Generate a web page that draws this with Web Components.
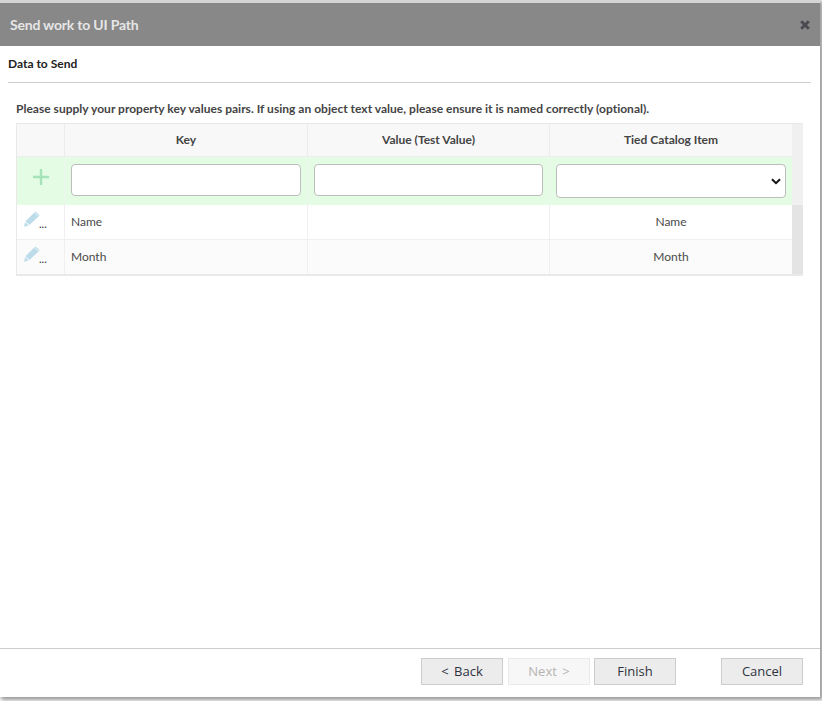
<!DOCTYPE html>
<html lang="en"><head><meta charset="utf-8"><title>Send work to UI Path</title>
<style>html,body{margin:0;padding:0;background:#fff;height:100%;overflow:hidden}body{font-family:Lato,"Liberation Sans",sans-serif;color:#333}</style>
</head><body>
<wizard-dialog>
  <span slot="title">Send work to UI Path</span>
  <span slot="step">Data to Send</span>
  <p>Please supply your property key values pairs. If using an object text value, please ensure it is named correctly (optional).</p>
  <kv-table></kv-table>
  <wiz-button slot="nav">&lt; Back</wiz-button>
  <wiz-button slot="nav" disabled>Next &gt;</wiz-button>
  <wiz-button slot="nav">Finish</wiz-button>
  <wiz-button slot="cancel">Cancel</wiz-button>
</wizard-dialog>
<script>
function def(name,html){customElements.define(name,class extends HTMLElement{connectedCallback(){if(this.shadowRoot)return;const r=this.attachShadow({mode:'open'});r.innerHTML=html;}});}
def('wizard-dialog',`<style>
:host{display:flex;flex-direction:column;box-sizing:border-box;width:820px;height:697px;border-top:3px solid #d4d4d4;background:#fff;box-shadow:2px 2px 4px 1px #999;font-family:Lato,"Liberation Sans",sans-serif}
header{height:43px;flex:none;background:#888;color:#e6e6e6;display:flex;align-items:center;justify-content:space-between;padding:0 9px 0 10px;font-size:14px;font-weight:700;letter-spacing:-.2px}
header svg{display:block}
.step{flex:none;margin:0 9px 0 8px;height:37px;box-sizing:border-box;border-bottom:1px solid #ccc;font-size:12px;font-weight:700;color:#222;padding-top:10px;line-height:16px}
main{flex:1;padding:18px 18px 0 16px;font-size:12px;font-weight:700;color:#444}
::slotted(p){margin:0 0 6px;font-size:12px;line-height:16px;color:#444;letter-spacing:.017px}
footer{flex:none;height:49px;box-sizing:border-box;border-top:1px solid #ccc;display:flex;justify-content:space-between;padding:9px 17px 0 421px}
.nav{display:flex;gap:4px}
.nav ::slotted(wiz-button:first-of-type){margin-right:1px}
</style>
<header><slot name="title"></slot><svg width="12" height="12" viewBox="0 0 12 12" aria-hidden="true"><path d="M2.2 2.2 9.8 9.8M9.8 2.2 2.2 9.8" stroke="#4a4a52" stroke-width="3"/></svg></header>
<div class="step"><slot name="step"></slot></div>
<main><slot></slot></main>
<footer><div class="nav"><slot name="nav"></slot></div><slot name="cancel"></slot></footer>`);
def('wiz-button',`<style>
:host{display:flex;align-items:center;justify-content:center;box-sizing:border-box;width:82px;height:27px;padding-bottom:2px;background:#ececec;border:1px solid #ccc;font:13px "Open Sans","Noto Sans",sans-serif;word-spacing:2px;color:#2f3340}
:host([disabled]){background:#f7f7f7;border-color:#eaeaea;color:#b4b4b4}
</style><slot></slot>`);
const pencil=`<svg width="16" height="16" viewBox="0 0 16 16" aria-hidden="true"><path d="M11.5 .4 15.6 4.4 5.4 14 1.4 10.2Z" fill="#bcdcea"/><path d="M1 11 4.6 14.4 .2 15.7Z" fill="#bcdcea"/><path d="M10.4 1.5 14.5 5.5" stroke="#fff" stroke-width=".6"/></svg>`;
const row=(k,c)=>`<div class="row"><div class="c edit">${pencil}<span class="dots">...</span></div><div class="c">${k}</div><div class="c"></div><div class="c mid">${c}</div></div>`;
def('kv-table',`<style>
:host{display:block;box-sizing:border-box;width:787px;border:1px solid #e9e9e9;border-width:1px 0 2px 1px;background:#f0f0f0;font-family:Lato,"Liberation Sans",sans-serif}
.g{display:grid;grid-template-columns:48px 243px 242px 242px}
.head{height:33px;background:#f8f8f8;border-bottom:1px solid #eee;box-sizing:border-box;margin-right:11px}
.head .c{height:32px;padding-bottom:2px;display:flex;align-items:center;justify-content:center;font-size:12px;font-weight:700;color:#444;border-right:1px solid #ececec;box-sizing:border-box}
.head .c:last-child,.row .c:last-child,.add .c:last-child{border-right:0}
.add{height:48px;background:#e3fce3;margin-right:11px}
.add .c{border-right:1px solid #eef5ee;box-sizing:border-box;display:flex;align-items:flex-start;padding:7px 6px 0}
.add .plus{padding:12px 0 0;justify-content:center}
input,.sel{display:block;box-sizing:border-box;width:100%;height:32px;margin:0;padding:0;background:#fff;border:1px solid #bdbdbd;border-radius:4px}
.sel{height:34px;position:relative}
.sel svg{position:absolute;right:4px;top:13px}
.rows{background:#e4e4e4;padding-right:11px}
.row{display:grid;grid-template-columns:48px 243px 242px 242px;height:35px;background:#fff;border-bottom:1px solid #f0f0f0;box-sizing:border-box;font-size:12px;font-weight:400;color:#4a4a4a}
.row:nth-child(2){background:#fbfbfb;border-bottom:0;height:34px}
.row .c{border-right:1px solid #f0f0f0;box-sizing:border-box;display:flex;align-items:center;padding:0 6px 2px}
.row:nth-child(2) .c{padding-bottom:1px}
.row .mid{justify-content:center}
.row .edit,.row:nth-child(2) .edit{padding:0 0 0 7px}
.edit svg{margin-top:-6px}
.dots{font-size:11px;color:#333;margin:3px 0 0 -1px}
</style>
<div class="g head"><div class="c"></div><div class="c">Key</div><div class="c">Value (Test Value)</div><div class="c">Tied Catalog Item</div></div>
<div class="g add"><div class="c plus"><svg width="16" height="16" viewBox="0 0 16 16" aria-hidden="true"><path d="M8 0V16M0 8H16" stroke="#a5e4bb" stroke-width="2.4"/></svg></div><div class="c"><input aria-label="Key"></div><div class="c"><input aria-label="Value"></div><div class="c"><div class="sel"><svg width="10" height="7" viewBox="0 0 10 7" aria-hidden="true"><path d="M1 1.2 5 5.2 9 1.2" fill="none" stroke="#111" stroke-width="2"/></svg></div></div></div>
<div class="rows">${row('Name','Name')}${row('Month','Month')}</div>`);
</script>
</body></html>
